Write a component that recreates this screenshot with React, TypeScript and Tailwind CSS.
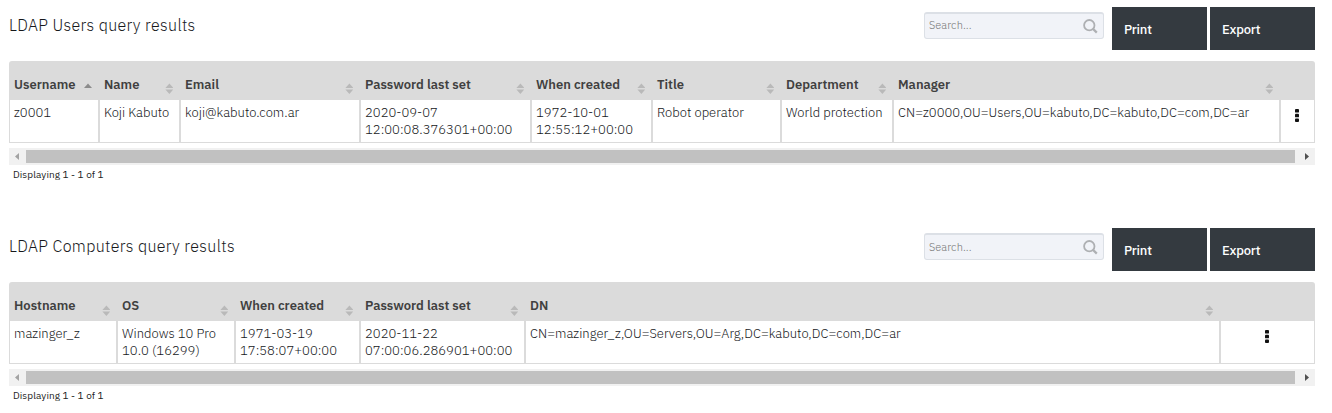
type Column = { label: string; width: string; lines: string[]; sorted?: boolean };

function SortIcon({ sorted, low }: { sorted?: boolean; low: boolean }) {
  return sorted ? (
    <svg width="8" height="11" viewBox="0 0 8 11" className="mt-[22px] shrink-0">
      <path d="M0 5 L4 .6 L8 5Z" fill="#8c8c8c" />
    </svg>
  ) : (
    <svg width="8" height="11" viewBox="0 0 8 11" className={`shrink-0 ${low ? "mt-[23px]" : "mt-[22px]"}`}>
      <path d="M.4 5 L4.4 .4 L8.4 5Z M.4 6.4 H8.4 L4.4 11Z" fill="#b9b9b9" />
    </svg>
  );
}

function Kebab() {
  return (
    <svg width="4" height="13" viewBox="0 0 4 13" fill="#111">
      <rect width="4" height="3.6" rx=".9" />
      <rect y="4.7" width="4" height="3.6" rx=".9" />
      <rect y="9.4" width="4" height="3.6" rx=".9" />
    </svg>
  );
}

function SearchBox({ low }: { low: boolean }) {
  return (
    <div className="mt-[5px] mr-2 flex h-[27px] w-[180px] items-start justify-between rounded-[3px] border border-t-2 border-[#dce0e6] bg-[#f1f3f8] pr-[5px] pl-1">
      <span className={`text-[11px] leading-[14px] font-light tracking-[0.05px] text-[#777] ${low ? "mt-[5px]" : "mt-[4px]"}`}>
        Search...
      </span>
      <svg width="15" height="15" viewBox="0 0 15 15" className="mt-[5px]" fill="none" stroke="#aeb0b3" strokeWidth="1.8">
        <circle cx="6.3" cy="6.2" r="5.2" />
        <path d="M10 9.9 L13.8 13.6" strokeWidth="2.2" />
      </svg>
    </div>
  );
}

function Panel({
  title,
  columns,
  actionWidth,
  low = false,
}: {
  title: string;
  columns: Column[];
  actionWidth: string;
  low?: boolean;
}) {
  return (
    <section className="flex h-[221px] w-[1306px] flex-col">
      <div className="flex h-[61px] items-start pt-[7px]">
        <h2 className="mt-[8px] flex-1 text-[16px] leading-[21px] font-light tracking-[0.35px] text-[#16181b]">{title}</h2>
        <SearchBox low={low} />
        <button className="mr-[3px] h-[43px] w-[95px] bg-[#343a40] pt-[2px] pl-3 text-left text-[13px] font-medium tracking-[-0.2px] text-white">
          Print
        </button>
        <button className="h-[43px] w-[105px] bg-[#343a40] pt-[2px] pl-3 text-left text-[13px] font-medium tracking-[-0.2px] text-white">
          Export
        </button>
      </div>

      <div className="flex h-[39px] rounded-t-[3px] bg-[#dbdbdb]">
        {columns.map((c) => (
          <div key={c.label} className={`flex shrink-0 justify-between pr-[7px] pl-[5px] ${c.width}`}>
            <span className="mt-[15px] text-[13px] leading-[17px] font-semibold whitespace-nowrap text-[#404040]">
              {c.label}
            </span>
            <SortIcon sorted={c.sorted} low={low} />
          </div>
        ))}
      </div>

      <div className="flex h-[43px] border-b border-[#dbdbdb]">
        {columns.map((c) => (
          <div
            key={c.label}
            className={`shrink-0 border-x border-[#dbdbdb] pt-[4px] pl-[4px] text-[13px] leading-[17px] font-light tracking-[0.02px] whitespace-nowrap text-[#16181b] ${c.width}`}
          >
            {c.lines.map((line) => (
              <div key={line}>{line}</div>
            ))}
          </div>
        ))}
        <div className={`flex shrink-0 justify-center border-x border-[#dbdbdb] pt-[9px] pr-px ${actionWidth}`}>
          <Kebab />
        </div>
      </div>

      <div className="mt-[5px] flex h-[17px] items-center bg-[#f1f1f1]">
        <svg width="17" height="17" viewBox="0 0 17 17">
          <path d="M10 5 V12 L6 8.5Z" fill="#a3a3a3" />
        </svg>
        <div className="h-[13px] w-[1269px] bg-[#c1c1c1]" />
        <svg width="20" height="17" viewBox="0 0 20 17">
          <path d="M10 5 V12 L14 8.5Z" fill="#505050" />
        </svg>
      </div>
      <p className="mt-[3px] pl-[4px] text-[10px] leading-[13px] tracking-[0.08px] text-[#222]">Displaying 1 - 1 of 1</p>
    </section>
  );
}

const userColumns: Column[] = [
  { label: "Username", width: "w-[90px]", sorted: true, lines: ["z0001"] },
  { label: "Name", width: "w-[81px]", lines: ["Koji Kabuto"] },
  { label: "Email", width: "w-[180px]", lines: ["koji@kabuto.com.ar"] },
  { label: "Password last set", width: "w-[171px]", lines: ["2020-09-07", "12:00:08.376301+00:00"] },
  { label: "When created", width: "w-[121px]", lines: ["1972-10-01", "12:55:12+00:00"] },
  { label: "Title", width: "w-[129px]", lines: ["Robot operator"] },
  { label: "Department", width: "w-[112px]", lines: ["World protection"] },
  { label: "Manager", width: "w-[387px]", lines: ["CN=z0000,OU=Users,OU=kabuto,DC=kabuto,DC=com,DC=ar"] },
];

const computerColumns: Column[] = [
  { label: "Hostname", width: "w-[108px]", lines: ["mazinger_z"] },
  { label: "OS", width: "w-[118px]", lines: ["Windows 10 Pro", "10.0 (16299)"] },
  { label: "When created", width: "w-[125px]", lines: ["1971-03-19", "17:58:07+00:00"] },
  { label: "Password last set", width: "w-[165px]", lines: ["2020-11-22", "07:00:06.286901+00:00"] },
  { label: "DN", width: "w-[695px]", lines: ["CN=mazinger_z,OU=Servers,OU=Arg,DC=kabuto,DC=com,DC=ar"] },
];

export default function App() {
  return (
    <main className="h-[413px] overflow-hidden bg-white pl-[9px] font-['IBM_Plex_Sans','Roboto',sans-serif]">
      <Panel title="LDAP Users query results" columns={userColumns} actionWidth="w-[35px]" />
      <Panel title="LDAP Computers query results" columns={computerColumns} actionWidth="w-[95px]" low />
    </main>
  );
}
